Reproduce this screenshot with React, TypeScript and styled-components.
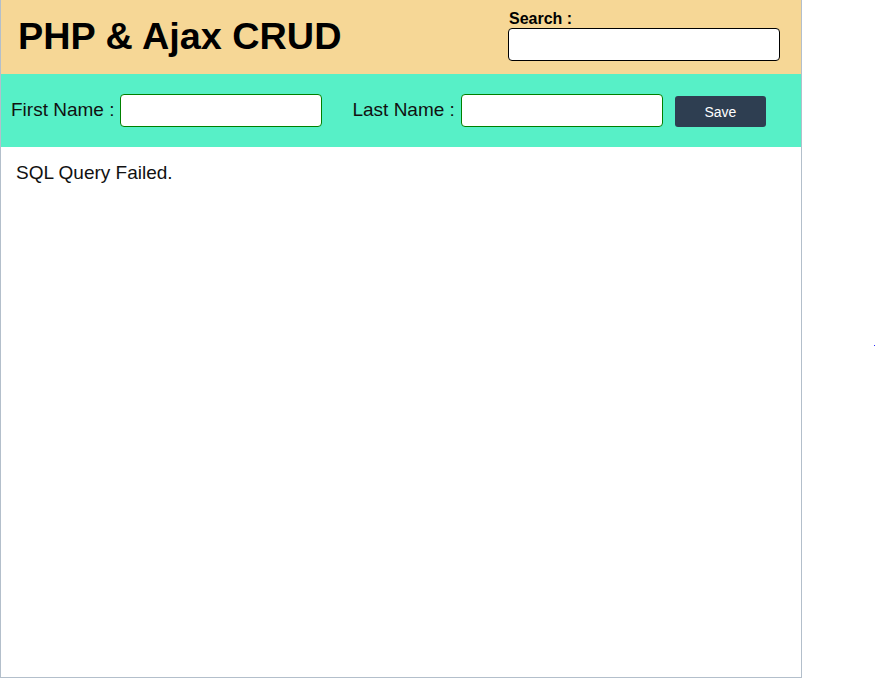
import React from 'react';
import styled, { createGlobalStyle } from 'styled-components';

const GlobalStyle = createGlobalStyle`
  html, body {
    margin: 0;
    padding: 0;
    background: #ffffff;
    font-family: "Liberation Sans", Arial, sans-serif;
  }
`;

const Page = styled.div`
  position: relative;
  width: 876px;
  height: 678px;
`;

const MainTable = styled.div`
  width: 800px;
  height: 677px;
  border-left: 1px solid #b3bfcb;
  border-right: 1px solid #b3bfcb;
  border-bottom: 1px solid #b3bfcb;
  display: flex;
  flex-direction: column;
`;

const Header = styled.div`
  height: 74px;
  background: #f6d796;
  display: flex;
  justify-content: space-between;
  align-items: center;
  padding: 0 21px 0 17px;
  box-sizing: border-box;
`;

const Title = styled.h1`
  margin: 0 0 1px;
  font-size: 37.8px;
  font-weight: bold;
  color: #000;
`;

const SearchBox = styled.div`
  display: flex;
  flex-direction: column;
  margin-top: -4px;
`;

const SearchLabel = styled.label`
  font-size: 16px;
  font-weight: bold;
  margin-left: 1px;
  line-height: 18px;
  padding-top: 1px;
`;

const Input = styled.input<{ $border: string; $width: number }>`
  width: ${(p) => p.$width}px;
  height: 33px;
  box-sizing: border-box;
  border: 1px solid ${(p) => p.$border};
  border-radius: 4px;
  background: #fff;
  outline: none;
  padding: 0 6px;
`;

const FormRow = styled.div`
  height: 73px;
  background: #57f0c7;
  display: flex;
  align-items: center;
  padding: 0 10px;
  box-sizing: border-box;
`;

const Field = styled.div<{ $gap?: number }>`
  display: flex;
  align-items: center;
  margin-right: ${(p) => p.$gap ?? 0}px;
`;

const FieldLabel = styled.label`
  font-size: 19px;
  color: #111;
  margin-right: 6px;
  margin-top: -1px;
  white-space: nowrap;
`;

const SaveButton = styled.button`
  width: 91px;
  height: 31px;
  margin-top: 2px;
  border: none;
  border-radius: 3px;
  background: #2e3e51;
  color: #fff;
  font-family: "Liberation Sans", Arial, sans-serif;
  font-size: 14px;
  font-weight: 500;
  cursor: pointer;
`;

const Content = styled.div`
  flex: 1;
  padding: 15px 15px;
  font-size: 19px;
  color: #111;
`;

const Dot = styled.span`
  position: absolute;
  left: 874px;
  top: 345px;
  width: 1px;
  height: 1px;
  background: #2a2aff;
`;

export default function App() {
  return (
    <>
      <GlobalStyle />
      <Page>
        <MainTable>
          <Header>
            <Title>PHP &amp; Ajax CRUD</Title>
            <SearchBox>
              <SearchLabel>Search :</SearchLabel>
              <Input $border="#000" $width={272} type="text" />
            </SearchBox>
          </Header>
          <FormRow>
            <Field $gap={30}>
              <FieldLabel>First Name :</FieldLabel>
              <Input $border="#008000" $width={202} type="text" />
            </Field>
            <Field $gap={12}>
              <FieldLabel>Last Name :</FieldLabel>
              <Input $border="#008000" $width={202} type="text" />
            </Field>
            <SaveButton>Save</SaveButton>
          </FormRow>
          <Content>SQL Query Failed.</Content>
        </MainTable>
        <Dot />
      </Page>
    </>
  );
}
